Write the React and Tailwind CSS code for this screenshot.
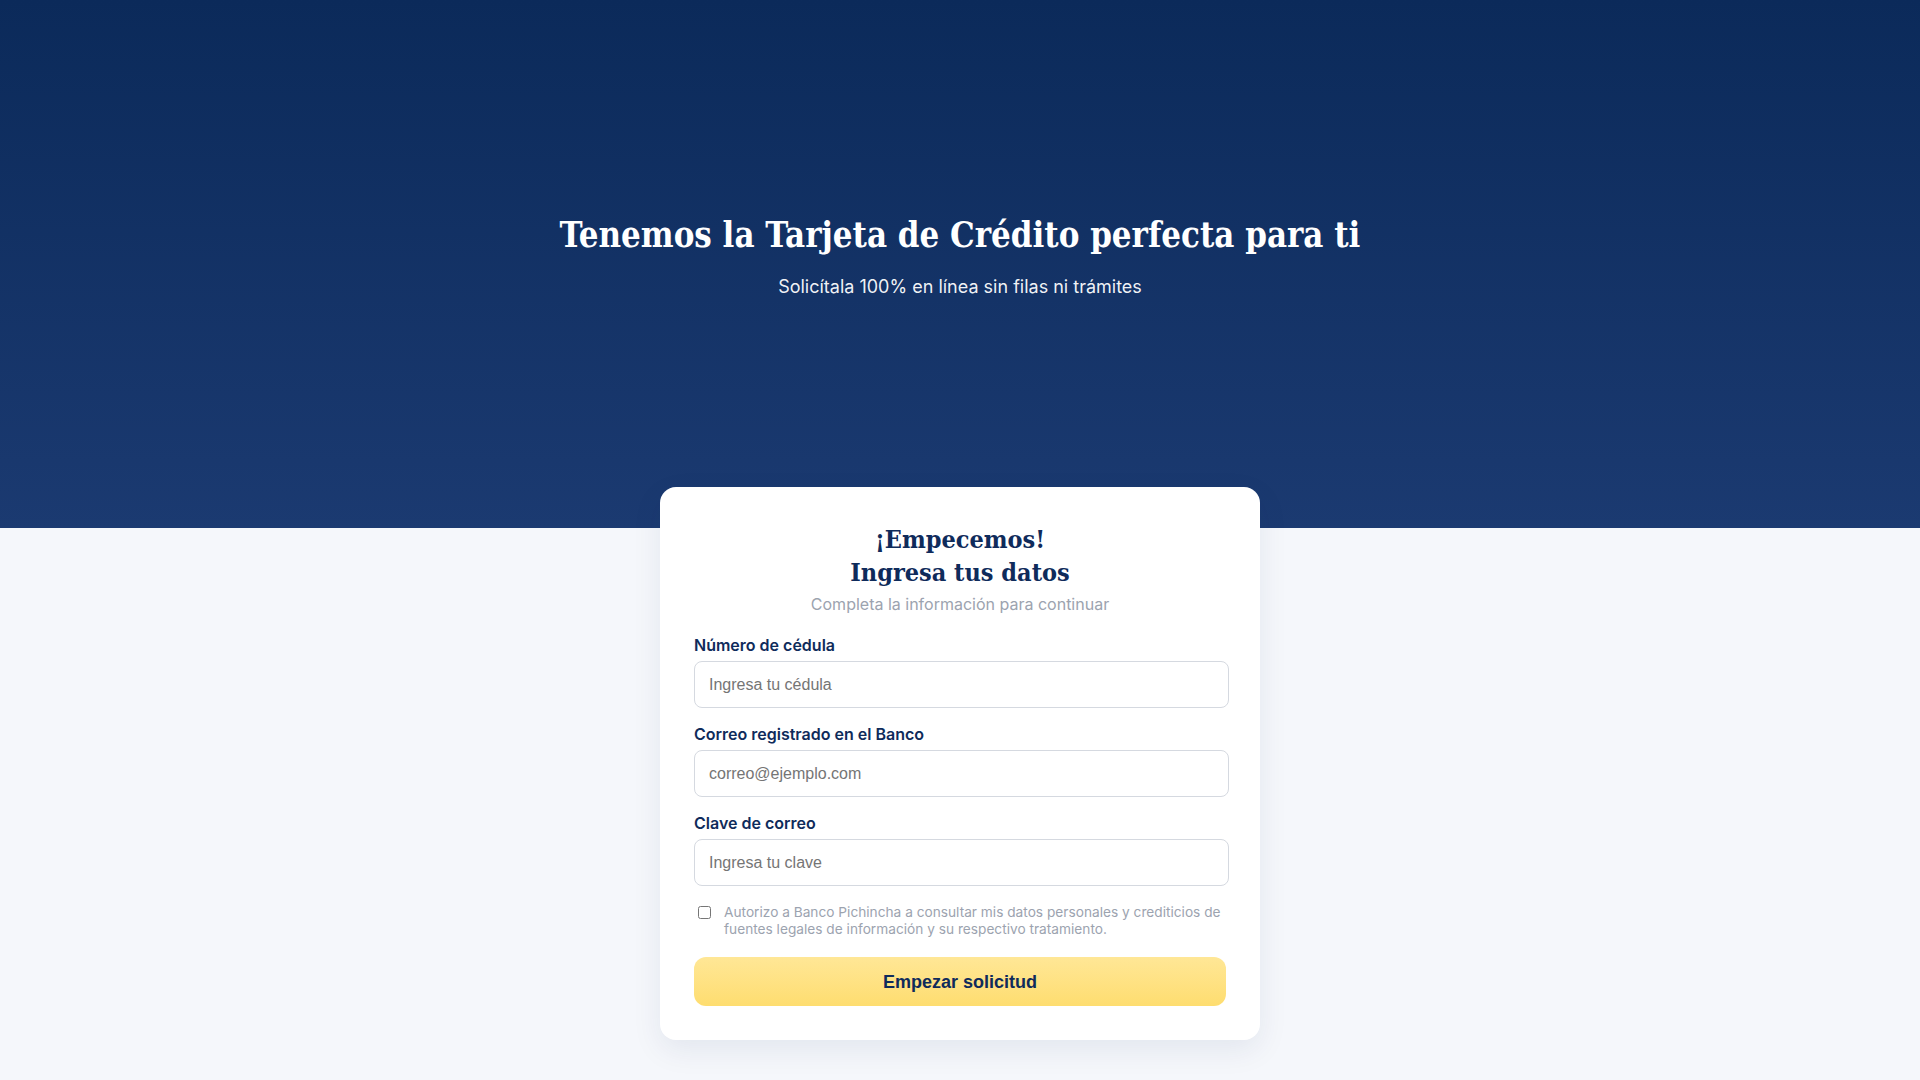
import { useState } from "react";

const serif = { fontFamily: '"DejaVu Serif Condensed", "DejaVu Serif", "Liberation Serif", serif' };

function Field({ label, placeholder, type = "text" }) {
  return (
    <div>
      <label className="mb-[6px] block text-base font-semibold leading-[20px] text-[#0f2b5b]">{label}</label>
      <input
        type={type}
        placeholder={placeholder}
        className="block h-[47px] w-[535px] rounded-lg border border-[#d5d9e0] bg-white px-[14px] text-base text-gray-800 placeholder:text-[#757575] outline-none"
        style={{ fontFamily: '"Liberation Sans", Arial, sans-serif' }}
      />
    </div>
  );
}

export default function App() {
  const [ok, setOk] = useState(false);

  return (
    <main className="min-h-screen bg-[#f5f7fb] pb-10 font-['Inter',sans-serif]">
      <header className="flex h-[528px] flex-col items-center bg-gradient-to-b from-[#0b2a5a] to-[#1b3a71] pt-[211px] text-white">
        <h1 className="text-[34.5px] font-bold leading-[48px]" style={serif}>
          Tenemos la Tarjeta de Crédito perfecta para ti
        </h1>
        <p className="mt-[14px] text-lg leading-[28px] text-white/95">Solicítala 100% en línea sin filas ni trámites</p>
      </header>

      <section className="-mt-[41px] flex justify-center">
        <div className="w-[600px] rounded-2xl bg-white px-[34px] pb-[34px] pt-[36px] shadow-[0_10px_30px_rgba(15,43,91,0.08)]">
          <h2 className="text-center text-[25px] font-bold leading-[33px] text-[#0f2b5b]" style={serif}>
            ¡Empecemos!
            <br />
            Ingresa tus datos
          </h2>
          <p className="mt-[3px] text-center text-base leading-[24px] text-[#9ca3af]">Completa la información para continuar</p>

          <form className="mt-[19px]" onSubmit={(e) => e.preventDefault()}>
            <div className="flex flex-col gap-[16px]">
              <Field label="Número de cédula" placeholder="Ingresa tu cédula" />
              <Field label="Correo registrado en el Banco" placeholder="correo@ejemplo.com" type="email" />
              <Field label="Clave de correo" placeholder="Ingresa tu clave" type="password" />
            </div>

            <label className="mt-[18px] flex items-start gap-[13px] pl-[4px]">
              <input
                type="checkbox"
                checked={ok}
                onChange={(e) => setOk(e.target.checked)}
                className="mt-[2px] h-[13px] w-[13px] shrink-0"
              />
              <span className="-mr-[4px] text-[13.7px] leading-[17px] text-[#9ca3af]">
                Autorizo a Banco Pichincha a consultar mis datos personales y crediticios de fuentes legales de información y su respectivo tratamiento.
              </span>
            </label>

            <button
              type="submit"
              className="mt-[19px] h-[49px] w-[532px] rounded-xl bg-gradient-to-b from-[#ffe796] to-[#fedd6f] text-lg font-bold text-[#0f2b5b]"
              style={{ fontFamily: '"Liberation Sans", Arial, sans-serif' }}
            >
              Empezar solicitud
            </button>
          </form>
        </div>
      </section>
    </main>
  );
}
